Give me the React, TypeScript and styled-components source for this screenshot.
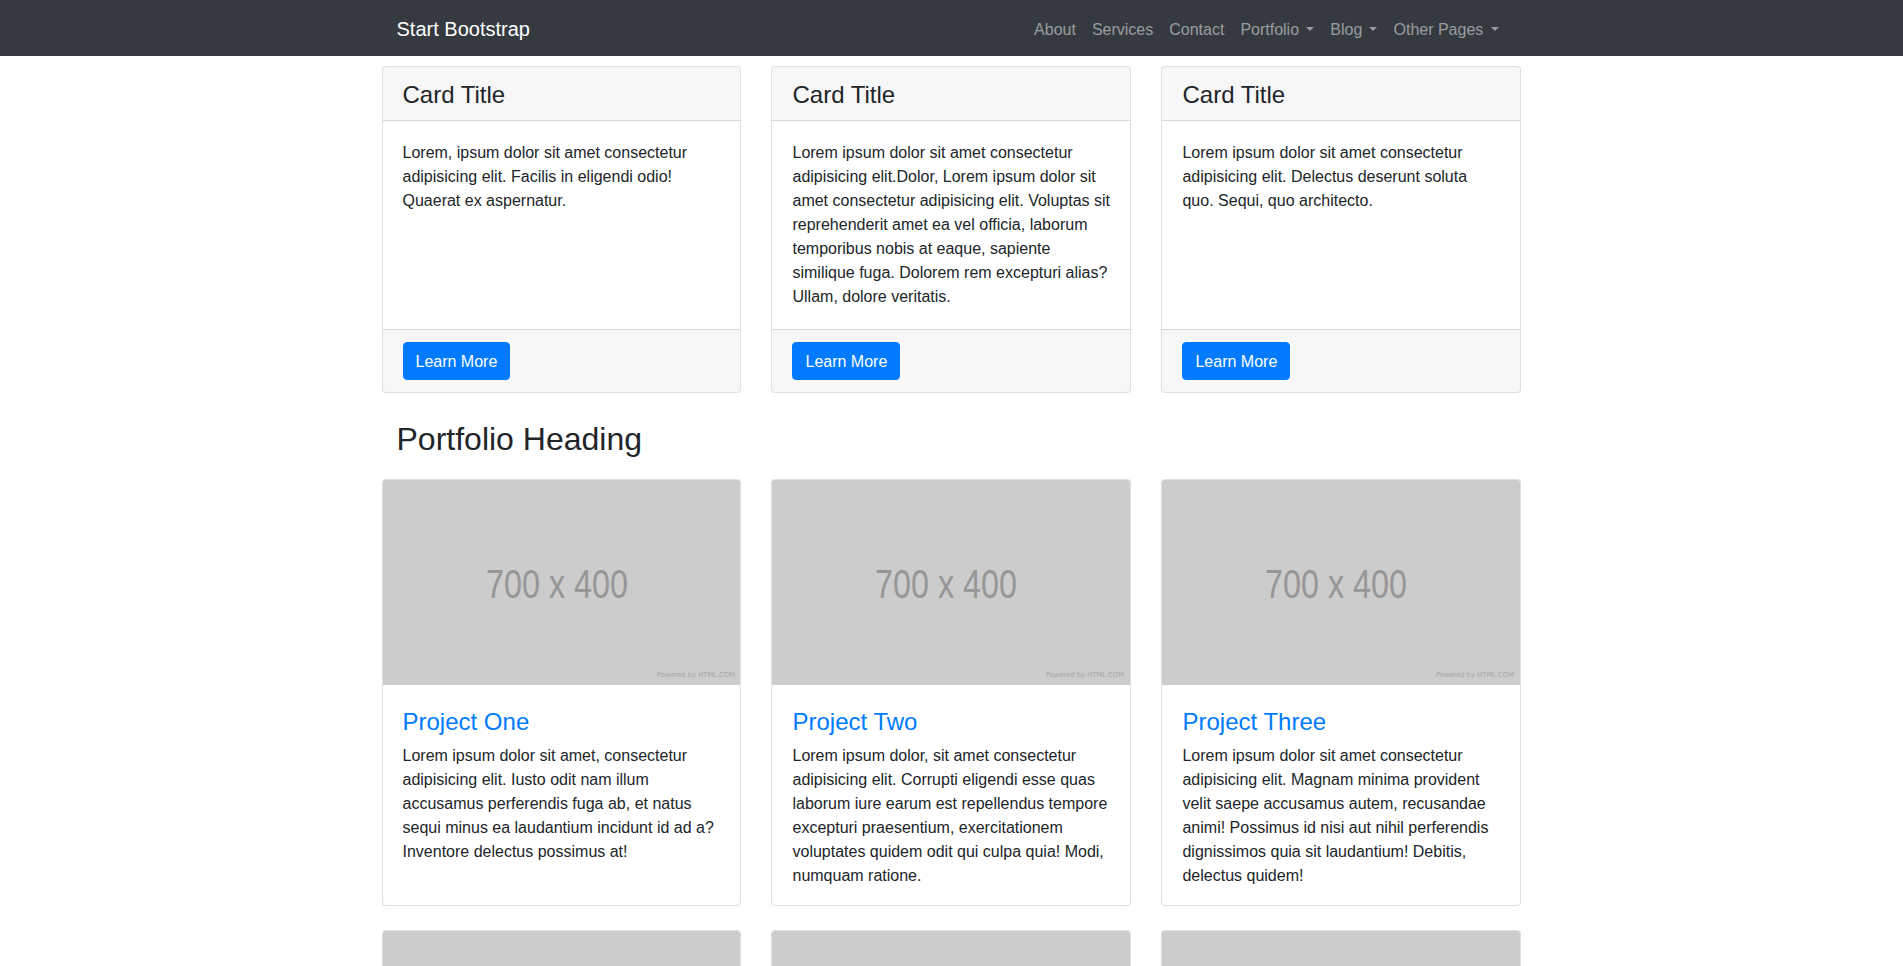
import React from 'react'
import styled, { createGlobalStyle } from 'styled-components'

const GlobalStyle = createGlobalStyle`
  body {
    margin: 0;
    font-family: 'Liberation Sans', Arial, sans-serif;
    font-size: 16px;
    line-height: 1.5;
    color: #212529;
    background: #fff;
  }
  * {
    box-sizing: border-box;
  }
`

const Navbar = styled.nav`
  background: #343a40;
  padding: 8px 0;
`

const NavContainer = styled.div`
  width: 1140px;
  margin: 0 auto;
  padding: 0 15px;
  display: flex;
  align-items: center;
  justify-content: space-between;
`

const Brand = styled.a`
  color: #fff;
  font-size: 20px;
  line-height: 30px;
  padding: 6px 0 4px;
  text-decoration: none;
`

const NavList = styled.ul`
  display: flex;
  list-style: none;
  margin: 0;
  padding: 0;
`

const NavLink = styled.a<{ $dropdown?: boolean }>`
  display: block;
  padding: 10px 8px 6px;
  color: rgba(255, 255, 255, 0.5);
  text-decoration: none;

  ${(p) =>
    p.$dropdown &&
    `
    &::after {
      content: '';
      display: inline-block;
      margin-left: 0.45em;
      vertical-align: 0.255em;
      border-top: 0.3em solid;
      border-right: 0.3em solid transparent;
      border-left: 0.3em solid transparent;
      border-bottom: 0;
    }
  `}
`

const Container = styled.main`
  width: 1170px;
  margin: 0 auto;
  padding: 10px 15px 0;
`

const Row = styled.div`
  display: flex;
  flex-wrap: wrap;
  margin: 0 -15px;
`

const Col = styled.div`
  flex: 0 0 33.3333%;
  max-width: 33.3333%;
  padding: 0 15px;
  margin-bottom: 24px;
`

const Card = styled.div`
  display: flex;
  flex-direction: column;
  height: 100%;
  background: #fff;
  border: 1px solid rgba(0, 0, 0, 0.125);
  border-radius: 4px;
  overflow: hidden;
`

const CardHeader = styled.div`
  padding: 14px 20px 10px;
  background: rgba(0, 0, 0, 0.03);
  border-bottom: 1px solid rgba(0, 0, 0, 0.125);
`

const CardHeading = styled.h4`
  margin: 0;
  font-size: 24px;
  font-weight: 400;
  line-height: 1.2;
`

const CardBody = styled.div<{ $compact?: boolean }>`
  flex: 1 1 auto;
  padding: ${(p) => (p.$compact ? '20px 20px 17px' : '20px')};
`

const CardText = styled.p`
  margin: 0;
`

const CardFooter = styled.div`
  padding: 12px 20px;
  background: rgba(0, 0, 0, 0.03);
  border-top: 1px solid rgba(0, 0, 0, 0.125);
`

const PrimaryButton = styled.a`
  display: inline-block;
  padding: 7px 12px 5px;
  font-size: 16px;
  line-height: 24px;
  color: #fff;
  background: #007bff;
  border: 1px solid #007bff;
  border-radius: 4px;
  text-decoration: none;
`

const SectionHeading = styled.h2`
  margin: 0 0 24px;
  padding: 3px 15px 0;
  height: 38px;
  font-size: 32px;
  font-weight: 400;
  line-height: 1.2;
`

const Placeholder = styled.svg`
  display: block;
  width: 100%;
  height: auto;
`

const ProjectTitle = styled.h4`
  margin: 0 0 7px;
  padding-top: 3px;
  font-size: 24px;
  font-weight: 400;
  line-height: 1.2;

  a {
    color: #007bff;
    text-decoration: none;
  }
`

const infoCards = [
  'Lorem, ipsum dolor sit amet consectetur adipisicing elit. Facilis in eligendi odio! Quaerat ex aspernatur.',
  'Lorem ipsum dolor sit amet consectetur adipisicing elit.Dolor, Lorem ipsum dolor sit amet consectetur adipisicing elit. Voluptas sit reprehenderit amet ea vel officia, laborum temporibus nobis at eaque, sapiente similique fuga. Dolorem rem excepturi alias? Ullam, dolore veritatis.',
  'Lorem ipsum dolor sit amet consectetur adipisicing elit. Delectus deserunt soluta quo. Sequi, quo architecto.',
]

const projects = [
  {
    title: 'Project One',
    text: 'Lorem ipsum dolor sit amet, consectetur adipisicing elit. Iusto odit nam illum accusamus perferendis fuga ab, et natus sequi minus ea laudantium incidunt id ad a? Inventore delectus possimus at!',
  },
  {
    title: 'Project Two',
    text: 'Lorem ipsum dolor, sit amet consectetur adipisicing elit. Corrupti eligendi esse quas laborum iure earum est repellendus tempore excepturi praesentium, exercitationem voluptates quidem odit qui culpa quia! Modi, numquam ratione.',
  },
  {
    title: 'Project Three',
    text: 'Lorem ipsum dolor sit amet consectetur adipisicing elit. Magnam minima provident velit saepe accusamus autem, recusandae animi! Possimus id nisi aut nihil perferendis dignissimos quia sit laudantium! Debitis, delectus quidem!',
  },
  {
    title: 'Project Four',
    text: 'Lorem ipsum dolor sit amet consectetur adipisicing elit. Nam viverra euismod odio, gravida pellentesque urna varius vitae.',
  },
  {
    title: 'Project Five',
    text: 'Lorem ipsum dolor sit amet consectetur adipisicing elit. Nam viverra euismod odio, gravida pellentesque urna varius vitae.',
  },
  {
    title: 'Project Six',
    text: 'Lorem ipsum dolor sit amet consectetur adipisicing elit. Nam viverra euismod odio, gravida pellentesque urna varius vitae.',
  },
]

const PlaceholderImage = () => (
  <Placeholder viewBox="0 0 358 205" preserveAspectRatio="none">
    <rect width="358" height="205" fill="#cccccc" />
    <text
      x="174"
      y="118"
      fill="#969696"
      fontSize="40"
      fontFamily="'Liberation Sans', Arial, sans-serif"
      textAnchor="middle"
      textLength="142"
      lengthAdjust="spacingAndGlyphs"
    >
      700 x 400
    </text>
    <text
      x="352"
      y="197"
      fill="#a6a6a6"
      fontSize="7"
      fontFamily="'DejaVu Sans', sans-serif"
      textAnchor="end"
      textLength="78"
      lengthAdjust="spacingAndGlyphs"
    >
      Powered by HTML.COM
    </text>
  </Placeholder>
)

export default function App() {
  return (
    <>
      <GlobalStyle />
      <Navbar>
        <NavContainer>
          <Brand href="#">Start Bootstrap</Brand>
          <NavList>
            <li><NavLink href="#">About</NavLink></li>
            <li><NavLink href="#">Services</NavLink></li>
            <li><NavLink href="#">Contact</NavLink></li>
            <li><NavLink href="#" $dropdown>Portfolio</NavLink></li>
            <li><NavLink href="#" $dropdown>Blog</NavLink></li>
            <li><NavLink href="#" $dropdown>Other Pages</NavLink></li>
          </NavList>
        </NavContainer>
      </Navbar>

      <Container>
        <Row>
          {infoCards.map((text, i) => (
            <Col key={i}>
              <Card>
                <CardHeader>
                  <CardHeading>Card Title</CardHeading>
                </CardHeader>
                <CardBody>
                  <CardText>{text}</CardText>
                </CardBody>
                <CardFooter>
                  <PrimaryButton href="#">Learn More</PrimaryButton>
                </CardFooter>
              </Card>
            </Col>
          ))}
        </Row>

        <SectionHeading>Portfolio Heading</SectionHeading>

        <Row>
          {projects.map((p) => (
            <Col key={p.title}>
              <Card>
                <PlaceholderImage />
                <CardBody $compact>
                  <ProjectTitle>
                    <a href="#">{p.title}</a>
                  </ProjectTitle>
                  <CardText>{p.text}</CardText>
                </CardBody>
              </Card>
            </Col>
          ))}
        </Row>
      </Container>
    </>
  )
}
